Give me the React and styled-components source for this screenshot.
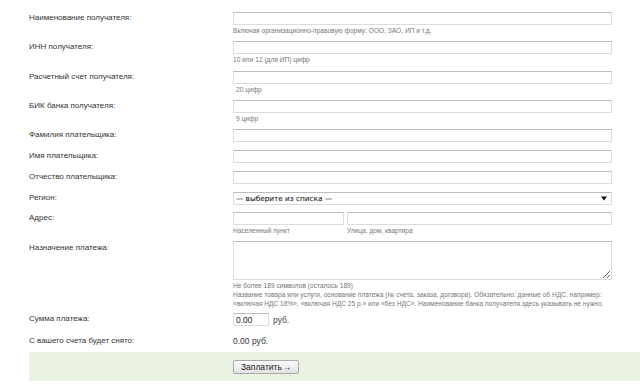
import styled, { createGlobalStyle } from "styled-components";

const GlobalStyle = createGlobalStyle`
  html, body {
    margin: 0;
    padding: 0;
    background: #fff;
  }
  body {
    font-family: "Liberation Sans", Arial, sans-serif;
    color: #333;
  }
`;

const Form = styled.form`
  width: 640px;
  padding: 12px 0 0 29px;
  box-sizing: border-box;
`;

const Row = styled.div`
  display: grid;
  grid-template-columns: 204px 379px;
  margin-bottom: ${(props) => props.$gap || 8}px;
`;

const Label = styled.div`
  font-size: 8px;
  line-height: 12px;
  color: #333;
  padding-top: ${(props) => props.$top || 0}px;
`;

const Field = styled.div`
  display: flex;
  flex-direction: column;
`;

const Input = styled.input`
  box-sizing: border-box;
  height: 13px;
  width: ${(props) => props.$width || "100%"};
  margin: 0;
  padding: 0 2px;
  border: 1px solid #dcdcdc;
  border-top-color: #bdbdbd;
  font-family: "Liberation Sans", Arial, sans-serif;
  font-size: ${(props) => props.$size || 8}px;
  color: #222;
  background: #fff;
  outline: none;
`;

const Hint = styled.div`
  font-size: 6.6px;
  line-height: 9px;
  color: #777;
  margin-top: ${(props) => (props.$flush ? 0 : 1)}px;
  padding-left: ${(props) => props.$indent || 0}px;
  white-space: nowrap;
`;

const Pair = styled.div`
  display: grid;
  grid-template-columns: 111px 265px;
  column-gap: 3px;
`;

const SelectBox = styled.div`
  position: relative;
  box-sizing: border-box;
  height: 13px;
  border: 1px solid #dcdcdc;
  border-top-color: #bdbdbd;
  background: #fff;
`;

const Select = styled.select`
  display: block;
  box-sizing: border-box;
  appearance: none;
  width: 100%;
  height: 11px;
  margin: 0;
  padding: 0 2px;
  border: 0;
  background: transparent;
  font-family: "DejaVu Sans", Tahoma, sans-serif;
  font-size: 7.3px;
  line-height: 11px;
  color: #000;
  outline: none;
`;

const Arrow = styled.svg`
  position: absolute;
  right: 4px;
  top: 3px;
  pointer-events: none;
`;

const TextArea = styled.textarea`
  box-sizing: border-box;
  display: block;
  width: 100%;
  height: 39px;
  margin: 0;
  padding: 2px;
  border: 1px solid #dcdcdc;
  border-top-color: #bdbdbd;
  font-family: "Liberation Sans", Arial, sans-serif;
  font-size: 8px;
  outline: none;
`;

const Amount = styled.div`
  display: flex;
  align-items: center;
  gap: 4px;
  font-size: 8.5px;
  color: #444;
`;

const Value = styled.div`
  font-size: 8.5px;
  line-height: 12px;
  color: #333;
`;

const Actions = styled.div`
  display: grid;
  grid-template-columns: 204px 379px;
  height: 29px;
  align-items: center;
  background: #e9f2e3;
`;

const Button = styled.button`
  grid-column: 2;
  box-sizing: border-box;
  width: 66px;
  height: 14px;
  padding: 0;
  border: 1px solid #a9a9a9;
  border-radius: 2px;
  background: linear-gradient(#fafafa, #e2e2e2);
  font-family: "Liberation Sans", Arial, sans-serif;
  font-size: 8.5px;
  color: #222;
  line-height: 12px;
`;

export default function App() {
  return (
    <>
      <GlobalStyle />
      <Form>
        <Row $gap={6}>
          <Label>Наименование получателя:</Label>
          <Field>
            <Input />
            <Hint>Включая организационно-правовую форму: ООО, ЗАО, ИП и т.д.</Hint>
          </Field>
        </Row>
        <Row $gap={7}>
          <Label>ИНН получателя:</Label>
          <Field>
            <Input />
            <Hint>10 или 12 (для ИП) цифр</Hint>
          </Field>
        </Row>
        <Row $gap={6}>
          <Label>Расчетный счет получателя:</Label>
          <Field>
            <Input />
            <Hint $indent={3}>20 цифр</Hint>
          </Field>
        </Row>
        <Row $gap={6}>
          <Label>БИК банка получателя:</Label>
          <Field>
            <Input />
            <Hint $indent={3}>9 цифр</Hint>
          </Field>
        </Row>
        <Row>
          <Label>Фамилия плательщика:</Label>
          <Input />
        </Row>
        <Row>
          <Label>Имя плательщика:</Label>
          <Input />
        </Row>
        <Row>
          <Label>Отчество плательщика:</Label>
          <Input />
        </Row>
        <Row $gap={7}>
          <Label>Регион:</Label>
          <SelectBox>
            <Select defaultValue="">
              <option value="">— выберите из списка —</option>
            </Select>
            <Arrow width="6" height="5" viewBox="0 0 6 5">
              <path d="M0 0.5H6L3 4.5Z" fill="#111" />
            </Arrow>
          </SelectBox>
        </Row>
        <Row $gap={6}>
          <Label>Адрес:</Label>
          <Pair>
            <Field>
              <Input />
              <Hint>Населенный пункт</Hint>
            </Field>
            <Field>
              <Input />
              <Hint>Улица, дом, квартира</Hint>
            </Field>
          </Pair>
        </Row>
        <Row $gap={5}>
          <Label $top={1}>Назначение платежа:</Label>
          <Field>
            <TextArea />
            <Hint>Не более 189 символов (осталось 189)</Hint>
            <Hint $flush>
              Название товара или услуги, основание платежа (№ счета, заказа, договора). Обязательно: данные об НДС, например:
            </Hint>
            <Hint $flush>
              «включая НДС 18%», «включая НДС 25 р.» или «без НДС». Наименование банка получателя здесь указывать не нужно.
            </Hint>
          </Field>
        </Row>
        <Row $gap={9}>
          <Label>Сумма платежа:</Label>
          <Amount>
            <Input $width="36px" $size={8.5} defaultValue="0.00" />
            руб.
          </Amount>
        </Row>
        <Row $gap={5}>
          <Label>С вашего счета будет снято:</Label>
          <Value>0.00 руб.</Value>
        </Row>
        <Actions>
          <Button type="button">Заплатить&#8202;→</Button>
        </Actions>
      </Form>
    </>
  );
}
